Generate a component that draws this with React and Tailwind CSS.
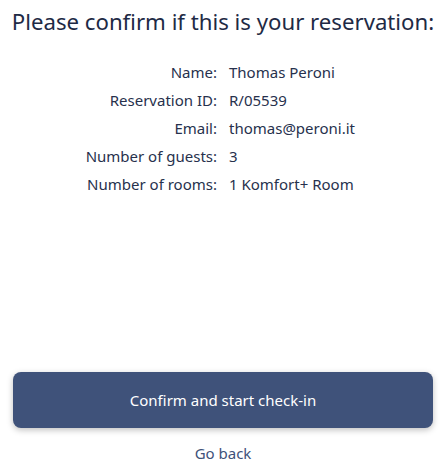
export default function App() {
  const rows = [
    ["Name:", "Thomas Peroni"],
    ["Reservation ID:", "R/05539"],
    ["Email:", "thomas@peroni.it"],
    ["Number of guests:", "3"],
    ["Number of rooms:", "1 Komfort+ Room"],
  ];
  return (
    <div
      className="w-[446px] h-[475px] bg-white flex flex-col text-[#1f2a44]"
      style={{ fontFamily: '"Noto Sans", "Open Sans", sans-serif' }}
    >
      <h1 className="text-[22.2px] leading-[30px] text-center pt-[7px] text-[#1e2a45]">
        Please confirm if this is your reservation:
      </h1>
      <div className="grid grid-cols-2 gap-x-3 mt-[21px] text-[15px] leading-[28px] text-[#27314d]">
        {rows.map(([k, v]) => (
          <div key={k} className="contents">
            <div className="text-right">{k}</div>
            <div>{v}</div>
          </div>
        ))}
      </div>
      <div className="flex-1" />
      <div className="px-[13px]">
        <button className="w-full h-[56px] rounded-lg bg-[#3f527a] text-white text-[15px] shadow-[0_2px_6px_rgba(0,0,0,0.25)]">
          Confirm and start check-in
        </button>
      </div>
      <div className="text-center text-[15px] text-[#3f527a] mt-[15px] mb-[12px] leading-[20px]">
        Go back
      </div>
    </div>
  );
}
